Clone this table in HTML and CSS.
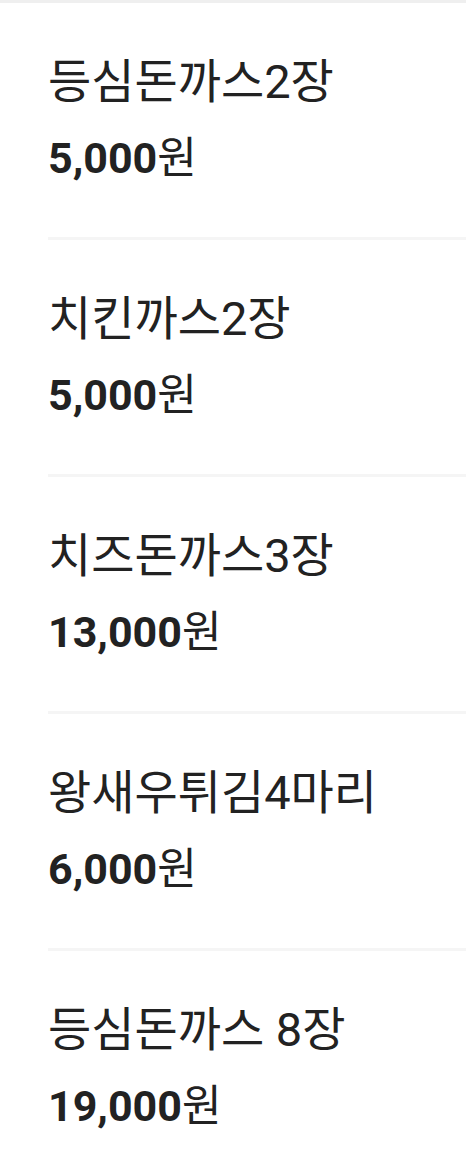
FILE: index.html
```html
<!DOCTYPE html>
<html lang="ko">
<head>
<meta charset="utf-8">
<link rel="stylesheet" href="styles.css">
</head>
<body>
<div class="topbar"></div>
<ul class="menu">
  <li class="item"><div class="name">등심돈까스2장</div><div class="price">5,000<span class="unit">원</span></div></li>
  <li class="item"><div class="name">치킨까스2장</div><div class="price">5,000<span class="unit">원</span></div></li>
  <li class="item"><div class="name">치즈돈까스3장</div><div class="price">13,000<span class="unit">원</span></div></li>
  <li class="item"><div class="name">왕새우튀김4마리</div><div class="price">6,000<span class="unit">원</span></div></li>
  <li class="item"><div class="name">등심돈까스 8장</div><div class="price">19,000<span class="unit">원</span></div></li>
</ul>
</body>
</html>
```
FILE: styles.css
```css
html, body {
  margin: 0;
  padding: 0;
  background: #ffffff;
}
body {
  font-family: Roboto, "Noto Sans CJK KR", sans-serif;
  color: #222222;
}
.topbar {
  height: 3px;
  background: #efefef;
}
.menu {
  list-style: none;
  margin: 0;
  padding: 0;
}
.item {
  margin-left: 48px;
  padding: 51px 0 53px;
  border-bottom: 3px solid #f5f5f5;
  display: flex;
  flex-direction: column;
  gap: 22px;
}
.item:last-child {
  border-bottom: none;
}
.name {
  font-size: 47px;
  line-height: 56px;
  font-weight: 400;
  color: #222222;
  white-space: nowrap;
}
.price {
  font-size: 43px;
  line-height: 52px;
  font-weight: 700;
  color: #222222;
  white-space: nowrap;
}
.unit {
  font-weight: 400;
}
```
